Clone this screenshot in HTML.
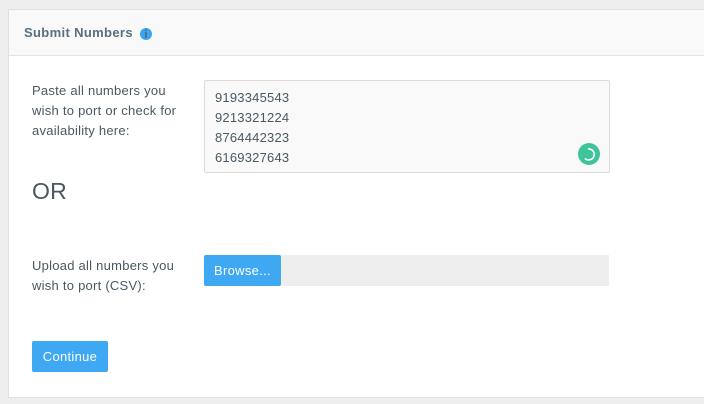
<!DOCTYPE html>
<html><head><style>
body{margin:0;width:704px;height:404px;background:#eeeeee;font-family:"Liberation Sans",sans-serif;position:relative;overflow:hidden;color:#4a5861}
.panel{position:absolute;left:8px;top:9px;width:710px;height:387px;background:#fff;border:1px solid #e0e0e0}
.hd{height:45px;background:#f9f9f9;border-bottom:1px solid #e3e3e3;position:relative}
.hd span{position:absolute;left:15px;top:15px;font-size:13px;font-weight:bold;color:#5a6e7c;letter-spacing:0.35px}
.info{display:inline-block;width:12px;height:12px;border-radius:50%;background:#3aa6f0;color:#fff;font-size:10px;line-height:12px;text-align:center;vertical-align:-1px;margin-left:3px;font-family:"Liberation Serif",serif;font-weight:bold}
.lbl{position:absolute;left:32px;font-size:13px;line-height:20px;letter-spacing:0.25px}
.ta{position:absolute;left:204px;top:80px;width:406px;height:93px;background:#f9f9f9;border:1px solid #dcdcdc;border-radius:2px;box-sizing:border-box;padding:7px 10px;font-size:13px;line-height:20px;letter-spacing:0.2px}
.spin{position:absolute;left:578px;top:143px;width:22px;height:22px;border-radius:50%;background:#3fc39b}
.btn{position:absolute;background:#3ea8f2;color:#fff;font-size:13px;text-align:center;border-radius:2px;letter-spacing:0.3px}
</style></head><body>
<div class="panel"><div class="hd"><span>Submit Numbers <span class="info" style="position:static;letter-spacing:0">i</span></span></div></div>
<div class="lbl" style="top:81px">Paste all numbers you<br>wish to port or check for<br>availability here:</div>
<div class="lbl" style="top:176px;font-size:23px;line-height:30px">OR</div>
<div class="ta">9193345543<br>9213321224<br>8764442323<br>6169327643</div>
<div class="spin"><svg width="22" height="22"><path d="M10 6 A5.5 5.5 0 1 1 7 15.5" fill="none" stroke="#fff" stroke-width="1.6"/></svg></div>
<div class="lbl" style="top:256px">Upload all numbers you<br>wish to port (CSV):</div>
<div style="position:absolute;left:204px;top:255px;width:405px;height:31px;background:#eeeeee"></div>
<div class="btn" style="left:204px;top:255px;width:77px;height:31px;line-height:31px">Browse...</div>
<div class="btn" style="left:32px;top:341px;width:76px;height:31px;line-height:31px">Continue</div>
</body></html>
